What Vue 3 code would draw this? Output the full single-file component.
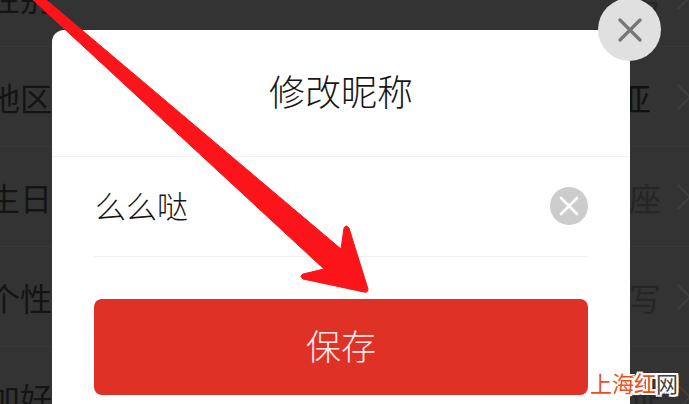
<script setup>
const rows = [
  { label: '性别', value: '男' },
  { label: '地区', value: '马来西亚', cls: 'dark short' },
  { label: '生日', value: '天蝎座' },
  { label: '个性签名', value: '未填写' },
  { label: '加好友方式', value: '需要验证' }
]
</script>

<template>
  <div class="page">
    <div class="list">
      <div v-for="r in rows" :key="r.label" class="row">
        <span class="label">{{ r.label }}</span>
        <div class="side">
          <span class="value" :class="r.cls">{{ r.value }}</span>
          <svg class="chev" width="14" height="26" viewBox="0 0 14 26"><path d="M1 1l12 12L1 25" fill="none" stroke="#3f3f3f" stroke-width="2"/></svg>
        </div>
      </div>
    </div>

    <div class="modal">
      <div class="head">修改昵称</div>
      <div class="field">
        <span class="nick">么么哒</span>
        <span class="clear">
          <svg width="20" height="20" viewBox="0 0 20 20"><path d="M2 2l16 16M18 2L2 18" stroke="#fff" stroke-width="2.6" stroke-linecap="round"/></svg>
        </span>
      </div>
      <button class="save">保存</button>
      <span class="close">
        <svg width="24" height="24" viewBox="0 0 24 24"><path d="M2 2l20 20M22 2L2 22" stroke="#777" stroke-width="3.2" stroke-linecap="round"/></svg>
      </span>
    </div>

    <svg class="arrow" width="689" height="404" viewBox="0 0 689 404">
      <path d="M31 -2L44 -2L341 249L344 228Q346 224 349 228L368 289Q368 293 364 292L303 279Q299 276 303 274L324 269Z" fill="#fb1419" stroke="#fb1419" stroke-width="1" stroke-linejoin="round"/>
    </svg>

    <div class="mark"><span class="hot">上海红</span><span class="net">网</span></div>
  </div>
</template>

<style scoped>
.page {
  position: relative;
  width: 689px;
  height: 404px;
  overflow: hidden;
  background: #333;
  font-family: "Noto Sans CJK SC", "Noto Sans", sans-serif;
}
.list {
  margin: -53px 0 0 -12px;
  width: 720px;
}
.row {
  display: flex;
  align-items: center;
  justify-content: space-between;
  box-sizing: border-box;
  height: 100px;
  padding-right: 17px;
  border-bottom: 1px solid #393939;
  font-size: 32px;
  color: #141414;
  white-space: nowrap;
}
.side {
  display: flex;
  align-items: center;
  gap: 16px;
}
.value {
  color: #262626;
}
.value.dark {
  color: #111;
}
.value.short {
  margin-right: 10px;
}
.chev {
  flex: none;
}
.modal {
  position: absolute;
  left: 52px;
  top: 30px;
  width: 578px;
  height: 400px;
  background: #fff;
  border-radius: 12px 0 0 0;
}
.head {
  display: flex;
  align-items: center;
  justify-content: center;
  box-sizing: border-box;
  height: 127px;
  padding-bottom: 6px;
  border-bottom: 1px solid #f2f2f2;
  font-size: 36px;
  font-weight: 300;
  color: #161616;
}
.field {
  display: flex;
  align-items: center;
  justify-content: space-between;
  box-sizing: border-box;
  height: 100px;
  margin: 0 42px 42px;
  border-bottom: 1px solid #f0f0f0;
  padding: 0 0 1px 1px;
}
.nick {
  margin-bottom: 4px;
  font-size: 31px;
  font-weight: 300;
  color: #161616;
}
.clear {
  display: flex;
  align-items: center;
  justify-content: center;
  width: 38px;
  height: 38px;
  border-radius: 50%;
  background: #ccc;
}
.save {
  display: block;
  box-sizing: border-box;
  width: 494px;
  height: 96px;
  margin: 0 42px;
  padding: 0 0 5px;
  border: 0;
  border-radius: 8px;
  background: #e03126;
  color: #fbe9e6;
  font: 300 35px "Noto Sans CJK SC", "Noto Sans", sans-serif;
}
.close {
  position: absolute;
  left: 546px;
  top: -32px;
  display: flex;
  align-items: center;
  justify-content: center;
  width: 63px;
  height: 63px;
  border-radius: 50%;
  background: #e0e0e0;
}
.arrow {
  position: absolute;
  left: 0;
  top: 0;
}
.mark {
  position: absolute;
  left: 590px;
  top: 365px;
  font-size: 22px;
  line-height: 34px;
  white-space: nowrap;
  text-shadow: 2px 0 #fff, -2px 0 #fff, 0 2px #fff, 0 -2px #fff, 2px 2px #fff, -2px 2px #fff, 2px -2px #fff, -2px -2px #fff;
}
.hot {
  color: #e8501c;
}
.net {
  color: #444;
}
</style>
